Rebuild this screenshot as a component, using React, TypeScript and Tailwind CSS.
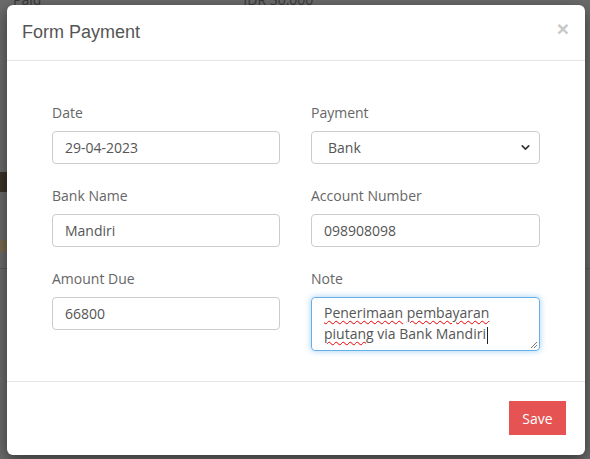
import { ChevronDown } from "lucide-react";

const Field = ({ label, value }: { label: string; value: string }) => (
  <div className="flex flex-col">
    <label className="text-[14px] leading-[20px] text-[#666] mb-[8px]">{label}</label>
    <div className="h-[33px] border border-[#ccc] rounded-[4px] pl-[12px] flex items-center text-[14px] text-[#555]">
      {value}
    </div>
  </div>
);

const App = () => {
  return (
    <div
      className="relative w-[590px] h-[459px] overflow-hidden bg-[#6b6b6b]"
      style={{ fontFamily: '"Open Sans", "Liberation Sans", sans-serif' }}
    >
      {/* page behind the backdrop */}
      <div className="flex text-[14px] text-[#3a3a3a] -mt-[11px] px-[13px] gap-[202px]">
        <span>Paid</span>
        <span>IDR 30.000</span>
      </div>
      <div className="mt-[162px] w-[7px] h-[20px] bg-[#3b3328]" />
      <div className="mt-[48px] w-[8px] h-[12px] bg-[#7a6a50]" />
      <div className="mt-[16px] h-[1px] bg-[#5a5a5a]" />

      {/* modal */}
      <div className="absolute left-[7px] top-[5px] w-[578px] h-[450px] bg-white rounded-[6px] shadow-[0_5px_15px_rgba(0,0,0,0.5)] flex flex-col">
        <div className="h-[56px] shrink-0 px-[15px] flex items-center justify-between border-b border-[#e5e5e5]">
          <h4
            className="text-[18px] text-[#555] mt-[-1px]"
            style={{ fontFamily: '"Liberation Sans", Arial, sans-serif' }}
          >
            Form Payment
          </h4>
          <span
            className="text-[21px] font-bold leading-none text-[#c8c8c8] mt-[-8px] mr-[1px]"
            style={{ fontFamily: '"Liberation Sans", Arial, sans-serif' }}
          >
            ×
          </span>
        </div>

        <div className="pl-[45px] pr-[44px] pt-[42px] pb-[30px] border-b border-[#e5e5e5]">
          <div className="grid grid-cols-[228px_229px] gap-x-[31px] gap-y-[22px]">
            <Field label="Date" value="29-04-2023" />
            <div className="flex flex-col">
              <label className="text-[14px] leading-[20px] text-[#666] mb-[8px]">Payment</label>
              <div className="h-[33px] border border-[#ccc] rounded-[4px] pl-[16px] pr-[7px] flex items-center justify-between text-[14px] text-[#555]">
                <span>Bank</span>
                <ChevronDown size={13} strokeWidth={3} className="text-[#333]" />
              </div>
            </div>
            <Field label="Bank Name" value="Mandiri" />
            <Field label="Account Number" value="098908098" />
            <Field label="Amount Due" value="66800" />
            <div className="flex flex-col">
              <label className="text-[14px] leading-[20px] text-[#666] mb-[8px]">Note</label>
              <div className="relative h-[54px] border border-[#66afe9] rounded-[4px] pl-[12px] pt-[4px] text-[14px] leading-[21px] text-[#555] shadow-[0_0_6px_rgba(102,175,233,0.6)]">
                <span className="underline decoration-wavy decoration-[#e00] decoration-1 underline-offset-2">Penerimaan</span>{" "}
                <span className="underline decoration-wavy decoration-[#e00] decoration-1 underline-offset-2">pembayaran</span>
                <br />
                <span className="underline decoration-wavy decoration-[#e00] decoration-1 underline-offset-2">piutang</span> via Bank Mandiri
                <span className="inline-block w-[1px] h-[17px] bg-[#222] align-middle ml-[1px]" />
                <svg className="absolute right-[1px] bottom-[1px]" width="9" height="9" viewBox="0 0 9 9">
                  <path d="M8 2L2 8M8 5L5 8" stroke="#777" strokeWidth="1" />
                </svg>
              </div>
            </div>
          </div>
        </div>

        <div className="flex justify-end pt-[19px] pr-[19px]">
          <button className="w-[57px] h-[34px] bg-[#e55353] text-white text-[14px]">Save</button>
        </div>
      </div>
    </div>
  );
};

export default App;
